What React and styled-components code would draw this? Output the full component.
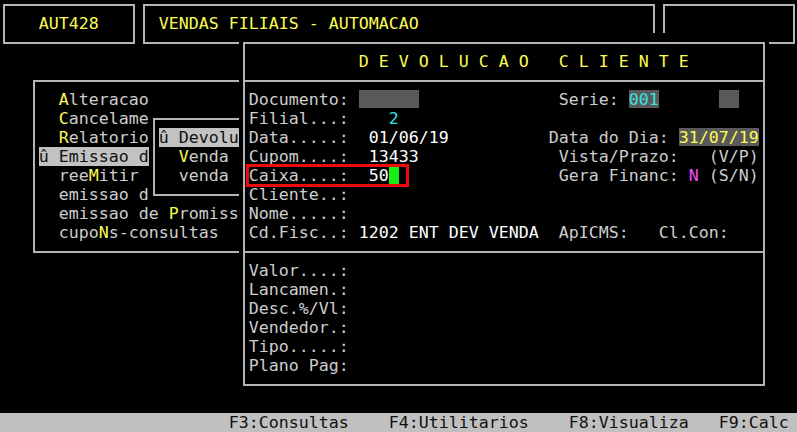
import React from 'react';
import styled, { createGlobalStyle } from 'styled-components';

// terminal cell: 10px x 19px, 80 x 23 cells
const CELL_W = 10;
const CELL_H = 19;

const GlobalStyle = createGlobalStyle`
    html, body {
        margin: 0;
        padding: 0;
        background: #000;
        overflow: hidden;
    }

    body {
        font-family: "DejaVu Sans Mono", "Liberation Mono", monospace;
        font-size: 16.61px;
        color: #cdcdcd;
    }
`;

const Screen = styled.div`
    display: grid;
    grid-template-columns: repeat(80, ${CELL_W}px);
    grid-template-rows: repeat(23, ${CELL_H}px);
    margin: -5px 0 0 -1.3px;
    width: 800px;
    height: 437px;
`;

const Window = styled.div`
    grid-column: ${(p) => p.$col + 1} / span ${(p) => p.$w};
    grid-row: ${(p) => p.$row + 1} / span ${(p) => p.$h};
    position: relative;
    display: flex;
    flex-direction: column;
    padding: ${CELL_H}px ${CELL_W}px;
    background: #000;
    min-width: 0;

    &::before {
        content: '';
        position: absolute;
        inset: 8.5px 4px;
        border: 2px solid #b4b4b4;
        pointer-events: none;
    }
`;

const Row = styled.div`
    height: ${CELL_H}px;
    line-height: ${CELL_H}px;
    white-space: pre;
    padding-left: ${(p) => (p.$indent || 0) * CELL_W}px;
`;

const Divider = styled.div`
    height: 2px;
    margin: 8.5px -6px;
    background: #b4b4b4;
`;

const Title = styled.span`
    color: #fcfc54;
`;

const Hotkey = styled.span`
    color: #fcfc54;
`;

const Value = styled.span`
    color: #ffffff;
`;

const Cyan = styled.span`
    color: #34e2e2;
`;

const Magenta = styled.span`
    color: #f050f0;
`;

const Filled = styled.span`
    display: inline-block;
    height: 18px;
    vertical-align: top;
    background: #5a5a5a;
    color: ${(p) => p.$color || 'inherit'};
`;

const Selected = styled.span`
    display: inline-block;
    height: ${CELL_H}px;
    vertical-align: top;
    background: #c2c2c2;
    color: #111;
`;

const Cursor = styled.span`
    display: inline-block;
    width: ${CELL_W}px;
    height: 17px;
    margin-top: 1px;
    vertical-align: top;
    background: #16ef16;
`;

const Marked = styled.span`
    position: relative;
    display: inline-block;
    height: ${CELL_H}px;
    vertical-align: top;

    &::after {
        content: '';
        position: absolute;
        top: -2px;
        bottom: -2px;
        left: -3px;
        right: 0;
        border: 3px solid #ee0a0a;
    }
`;

const StatusBar = styled.div`
    grid-column: 1 / -1;
    grid-row: 23;
    display: flex;
    padding-left: ${23 * CELL_W}px;
    background: #c0c0c0;
    color: #111;
    line-height: ${CELL_H}px;
    white-space: pre;
`;

const KeyHint = styled.span`
    margin-left: ${(p) => (p.$gap || 0) * CELL_W}px;
`;

const MENU_ITEMS = [
    { pre: '', key: 'A', post: 'lteracao' },
    { pre: '', key: 'C', post: 'ancelame' },
    { pre: '', key: 'R', post: 'elatorio' },
    { selected: 'û Emissao d' },
    { pre: 'ree', key: 'M', post: 'itir' },
    { pre: 'emissao d', key: '', post: '' },
    { pre: 'emissao de ', key: 'P', post: 'romiss' },
    { pre: 'cupo', key: 'N', post: 's-consultas' },
];

const LOWER_FIELDS = ['Valor....:', 'Lancamen.:', 'Desc.%/Vl:', 'Vendedor.:', 'Tipo.....:', 'Plano Pag:'];

const HINTS = [
    { label: 'F3:Consultas', gap: 0 },
    { label: 'F4:Utilitarios', gap: 4 },
    { label: 'F8:Visualiza', gap: 4 },
    { label: 'F9:Calc', gap: 3 },
];

const App = () => {
    return (
        <>
            <GlobalStyle />
            <Screen>
                <Window $col={0} $row={0} $w={14} $h={3}>
                    <Row $indent={3}><Title>AUT428</Title></Row>
                </Window>
                <Window $col={14} $row={0} $w={52} $h={3}>
                    <Row $indent={1}><Title>VENDAS FILIAIS - AUTOMACAO</Title></Row>
                </Window>
                <Window $col={66} $row={0} $w={14} $h={3} />

                <Window $col={3} $row={4} $w={24} $h={10}>
                    {MENU_ITEMS.map((item, i) => (
                        item.selected ? (
                            <Row key={i}><Selected>{item.selected}</Selected></Row>
                        ) : (
                            <Row key={i} $indent={2}>
                                {item.pre}<Hotkey>{item.key}</Hotkey>{item.post}
                            </Row>
                        )
                    ))}
                </Window>

                <Window $col={15} $row={6} $w={16} $h={5}>
                    <Row><Selected>û Devolu</Selected></Row>
                    <Row $indent={2}><Hotkey>V</Hotkey>enda</Row>
                    <Row $indent={2}>venda</Row>
                </Window>

                <Window $col={24} $row={2} $w={53} $h={19}>
                    <Row $indent={11}><Title>D E V O L U C A O   C L I E N T E</Title></Row>
                    <Divider />
                    <Row>
                        {'Documento: '}<Filled>{'      '}</Filled>
                        {'              Serie: '}<Filled><Cyan>001</Cyan></Filled>
                        {'      '}<Filled>{'  '}</Filled>
                    </Row>
                    <Row>{'Filial...:    '}<Cyan>2</Cyan></Row>
                    <Row>
                        {'Data.....:  '}<Value>01/06/19</Value>
                        {'          Data do Dia: '}<Filled $color='#fcfc54'>31/07/19</Filled>
                    </Row>
                    <Row>
                        {'Cupom....:  '}<Value>13433</Value>
                        {'              Vista/Prazo:   (V/P)'}
                    </Row>
                    <Row>
                        <Marked>{'Caixa....:  '}<Value>50</Value><Cursor />{' '}</Marked>
                        {'               Gera Financ: '}<Magenta>N</Magenta>{' (S/N)'}
                    </Row>
                    <Row>Cliente..:</Row>
                    <Row>Nome.....:</Row>
                    <Row>
                        {'Cd.Fisc..: '}<Value>1202 ENT DEV VENDA</Value>
                        {'  ApICMS:   Cl.Con:'}
                    </Row>
                    <Divider />
                    {LOWER_FIELDS.map((label) => (
                        <Row key={label}>{label}</Row>
                    ))}
                </Window>

                <StatusBar>
                    {HINTS.map((hint) => (
                        <KeyHint key={hint.label} $gap={hint.gap}>{hint.label}</KeyHint>
                    ))}
                </StatusBar>
            </Screen>
        </>
    );
};

export default App;
